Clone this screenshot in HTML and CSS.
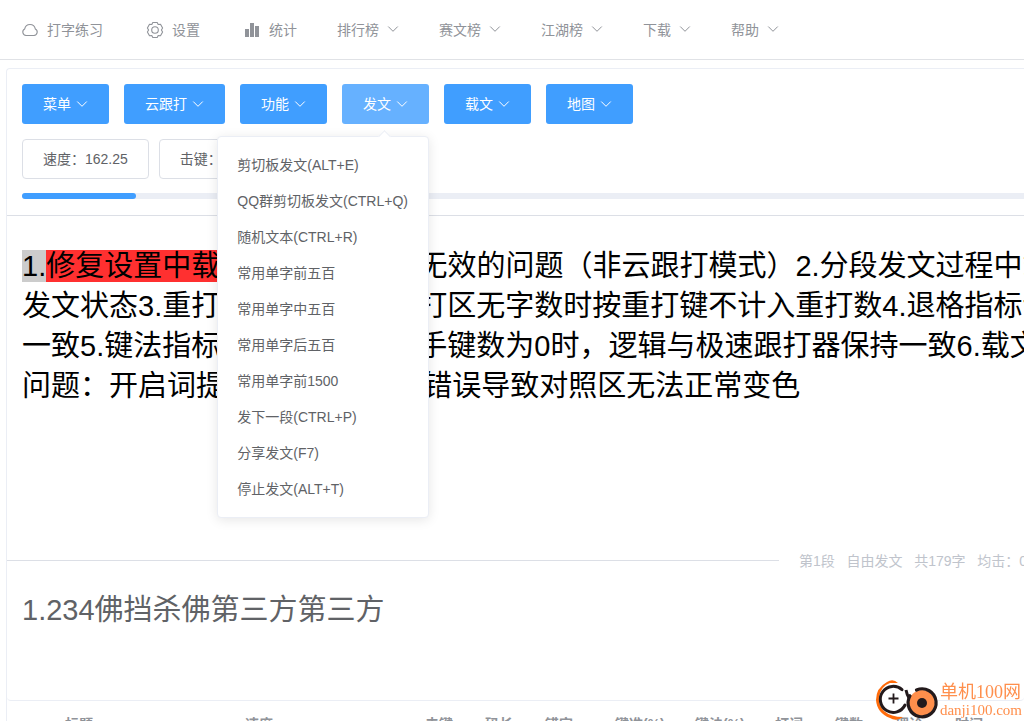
FILE: index.html
```html
<!DOCTYPE html>
<html lang="zh-CN">
<head>
<meta charset="utf-8">
<title>打字练习</title>
<link rel="stylesheet" href="styles.css">
</head>
<body>
<svg class="defs" aria-hidden="true">
  <symbol id="down" viewBox="0 0 12 12"><path d="M1.500 3.800 6 8.300l4.500-4.500" fill="none" stroke="currentColor" stroke-width="1" stroke-linecap="round"/></symbol>
</svg>
<header class="nav">
  <a class="nav-item" href="#"><svg class="nav-icon" viewBox="0 0 24 24"><path d="M8 17.500h8a3.500 3.500 0 0 0 1.300-6.600 A5.400 5.400 0 0 0 6.700 10.900 A3.500 3.500 0 0 0 8 17.500z" fill="none" stroke="currentColor" stroke-width="1.100"/></svg>打字练习</a>
  <a class="nav-item" href="#"><svg class="nav-icon" viewBox="0 0 24 24"><g fill="none" stroke="currentColor" stroke-width="1.100"><path d="M9.800 4.500h4.400l1 2 2.300-.2 2.100 3.700-1.200 2 1.200 2-2.100 3.700-2.300-.2-1 2H9.800l-1-2-2.300.2L4.400 14l1.200-2-1.200-2 2.100-3.700 2.300.2z" stroke-linejoin="round"/><circle cx="12" cy="12" r="3.300"/></g></svg>设置</a>
  <a class="nav-item" href="#"><svg class="nav-icon" viewBox="0 0 24 24"><path d="M5 11h4v8H5zM10 5h4v14h-4zM15 8h4v11h-4z" fill="currentColor"/></svg>统计</a>
  <a class="nav-item" href="#">排行榜<svg class="nav-arrow"><use href="#down"/></svg></a>
  <a class="nav-item" href="#">赛文榜<svg class="nav-arrow"><use href="#down"/></svg></a>
  <a class="nav-item" href="#">江湖榜<svg class="nav-arrow"><use href="#down"/></svg></a>
  <a class="nav-item" href="#">下载<svg class="nav-arrow"><use href="#down"/></svg></a>
  <a class="nav-item" href="#">帮助<svg class="nav-arrow"><use href="#down"/></svg></a>
</header>
<main class="card">
  <section class="tools">
    <div class="buttons">
      <button class="btn">菜单<svg class="btn-arrow"><use href="#down"/></svg></button>
      <button class="btn">云跟打<svg class="btn-arrow"><use href="#down"/></svg></button>
      <button class="btn">功能<svg class="btn-arrow"><use href="#down"/></svg></button>
      <div class="dropdown">
        <button class="btn btn-active" aria-expanded="true">发文<svg class="btn-arrow"><use href="#down"/></svg></button>
        <ul class="menu">
          <li>剪切板发文(ALT+E)</li>
          <li>QQ群剪切板发文(CTRL+Q)</li>
          <li>随机文本(CTRL+R)</li>
          <li>常用单字前五百</li>
          <li>常用单字中五百</li>
          <li>常用单字后五百</li>
          <li>常用单字前1500</li>
          <li>发下一段(CTRL+P)</li>
          <li>分享发文(F7)</li>
          <li>停止发文(ALT+T)</li>
        </ul>
      </div>
      <button class="btn">载文<svg class="btn-arrow"><use href="#down"/></svg></button>
      <button class="btn">地图<svg class="btn-arrow"><use href="#down"/></svg></button>
    </div>
    <div class="stats">
      <button class="stat">速度：162.25</button>
      <button class="stat">击键：</button>
    </div>
    <div class="progress"><div class="progress-fill"></div></div>
  </section>
  <section class="article">
    <p><span class="typed">1.</span><span class="wrong">修复设置中载文时字</span>数为 0，无效的问题（非云跟打模式）2.分段发文过程中载文</p>
    <p>发文状态3.重打数不为 0，且跟打区无字数时按重打键不计入重打数4.退格指标计算</p>
    <p>一致5.键法指标不大于 0，且左手键数为0时，逻辑与极速跟打器保持一致6.载文的</p>
    <p>问题：开启词提示且为 1，输入错误导致对照区无法正常变色</p>
  </section>
  <div class="divider"><span>第1段&nbsp;&nbsp; 自由发文&nbsp;&nbsp; 共179字&nbsp;&nbsp; 均击：0</span></div>
  <textarea class="typing" aria-label="跟打区" spellcheck="false">1.234佛挡杀佛第三方第三方</textarea>
  <table class="records">
    <colgroup><col class="w48"><col class="w180"><col class="w180"><col class="w60"><col class="w60"><col class="w70"><col class="w80"><col class="w80"><col class="w60"><col class="w60"><col class="w60"><col></colgroup>
    <thead><tr><th></th><th>标题</th><th>速度</th><th>击键</th><th>码长</th><th>错字</th><th>键准(%)</th><th>键法(%)</th><th>打词</th><th>键数</th><th>理论</th><th>时间</th></tr></thead>
  </table>
</main>
<aside class="brand">
  <svg class="brand-logo" viewBox="0 0 66 42">
    <path d="M24 4Q19-1 13 3Q2 9 2 21Q3 34 16 39Q22 43 29 38Q17 38 10 32Q4 26 5 18Q7 7 16 4z" fill="#ff6b0a"/>
    <circle cx="19.500" cy="20.500" r="13" fill="#fff"/>
    <path d="M28 10.700A13 13 0 1 0 31 26" fill="none" stroke="#231a1c" stroke-width="3" stroke-linecap="round"/>
    <path d="M32 11Q33 16 35 19" fill="none" stroke="#231a1c" stroke-width="3"/>
    <path d="M14.500 19.500h10M19.500 14.500v10" stroke="#231a1c" stroke-width="1.800"/>
    <circle cx="48" cy="24" r="13" fill="#ff8f4c"/>
    <path d="M42.500 11A14 14 0 1 1 36 16.800" fill="none" stroke="#231a1c" stroke-width="3.200" stroke-linecap="round"/>
    <circle cx="48" cy="24" r="5" fill="#231a1c"/>
  </svg>
  <div class="brand-text"><div class="brand-name">单机100网</div><div class="brand-url">danji100.com</div></div>
</aside>
</body>
</html>
```
FILE: styles.css
```css
* { box-sizing: border-box; }
body {
  margin: 0;
  height: 100vh;
  overflow: hidden;
  background: #fff;
  color: #606266;
  font: 14px/20px "Liberation Sans", "Noto Sans CJK SC", sans-serif;
}
button, textarea { font: inherit; color: inherit; }
.defs { position: absolute; width: 0; height: 0; }
.nav {
  display: flex;
  gap: 40px;
  height: 60px;
  padding-left: 18px;
  border-bottom: 1px solid #e0e2e6;
}
.nav-item { display: flex; align-items: center; color: #909399; text-decoration: none; white-space: nowrap; }
.nav-icon { width: 24px; height: 24px; margin-right: 5px; }
.nav-arrow { width: 12px; height: 12px; margin: 0 0 2px 8px; }
.card {
  margin: 8px 0 0 6px;
  border: 1px solid #ebeef5;
  border-right: 0;
  border-radius: 4px 0 0 0;
}
.tools { padding: 15px 0 16px 15px; border-bottom: 1px solid #dcdfe6; }
.buttons { display: flex; gap: 15px; }
.btn {
  display: flex;
  align-items: center;
  height: 40px;
  padding: 0 21px;
  border: 0;
  border-radius: 3px;
  background: #409eff;
  color: #fff;
  white-space: nowrap;
}
.btn-active { background: #66b1ff; }
.btn-arrow { width: 12px; height: 12px; margin-left: 5px; }
.dropdown { position: relative; }
.menu {
  position: absolute;
  z-index: 2;
  top: 52px;
  right: 0;
  margin: 0;
  padding: 10px 0;
  border: 1px solid #ebeef5;
  border-radius: 4px;
  background: #fff;
  box-shadow: 0 2px 12px rgba(0, 0, 0, .1);
  list-style: none;
}
.menu::before {
  content: "";
  position: absolute;
  top: -5px;
  right: 39px;
  width: 8px;
  height: 8px;
  border: solid #ebeef5;
  border-width: 1px 0 0 1px;
  background: #fff;
  transform: rotate(45deg);
}
.menu li { padding: 0 20px 0 19px; line-height: 36px; white-space: nowrap; }
.stats { display: flex; gap: 10px; margin: 15px 0 14px; }
.stat { height: 40px; padding: 0 20px; border: 1px solid #dcdfe6; border-radius: 4px; background: #fff; }
.progress { height: 6px; border-radius: 3px 0 0 3px; background: #ebeef5; }
.progress-fill { width: 114px; height: 6px; border-radius: 3px; background: #409eff; }
.article {
  min-height: 344px;
  padding: 30px 0 0 15px;
  overflow: hidden;
  color: #000;
  font-size: 29px;
  line-height: 40px;
}
.article p { margin: 0; white-space: nowrap; }
.typed { background: #ccc; }
.wrong { background: #ff3030; }
.divider { display: flex; align-items: center; height: 1px; color: #c0c4cc; white-space: nowrap; }
.divider::before { content: ""; flex: 1; height: 1px; margin-right: 20px; background: #dcdfe6; }
.divider span { flex: 0 0 225px; margin-right: -3px; }
.typing {
  display: block;
  width: 100%;
  height: 140px;
  padding: 29px 15px 5px;
  border: 0;
  border-bottom: 1px solid #ebeef5;
  border-radius: 4px;
  outline: 0;
  resize: none;
  background: transparent;
  font-size: 29px;
  line-height: 40px;
}
.records { width: 1060px; table-layout: fixed; border-collapse: collapse; }
.records th { padding: 12px 10px; color: #909399; text-align: left; line-height: 23px; white-space: nowrap; }
.w48 { width: 48px; }
.w60 { width: 60px; }
.w70 { width: 70px; }
.w80 { width: 80px; }
.w180 { width: 180px; }
.brand { position: fixed; right: 2px; bottom: 0; z-index: 3; display: flex; color: #ff8f4c; }
.brand-logo { width: 66px; height: 42px; }
.brand-text { padding-top: 3px; font-family: "Liberation Serif", "Noto Sans CJK SC", serif; white-space: nowrap; }
.brand-name { font-size: 18px; line-height: 20px; }
.brand-url { font-size: 15px; line-height: 16px; }
```
